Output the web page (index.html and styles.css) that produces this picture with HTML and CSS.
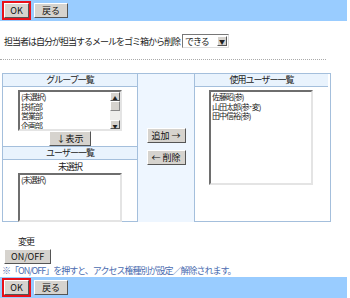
FILE: index.html
```html
<!DOCTYPE html>
<html>
<head>
    <title>アクセス権設定</title>
    <link rel="stylesheet" href="styles.css">
</head>
<body>
    <div class="bar">
        <span class="ok-frame"><button class="btn ok-button">OK</button></span>
        <button class="btn">戻る</button>
    </div>

    <div class="option-row">
        <span>担当者は自分が担当するメールをゴミ箱から削除</span>
        <span class="dropdown"><span class="dropdown-value">できる</span><span class="dropdown-arrow">&#9660;</span></span>
    </div>

    <div class="dotted-line"></div>

    <div class="panel">
        <div class="col col-left">
            <div class="col-head">グループ一覧</div>
            <div class="group-box">
                <div class="listbox group-list">
                    <div class="list-items">
                        <div>(未選択)</div>
                        <div>技術部</div>
                        <div>営業部</div>
                        <div>企画部</div>
                    </div>
                    <div class="scrollbar">
                        <span class="scroll-btn">&#9650;</span>
                        <span class="scroll-thumb"></span>
                        <span class="scroll-track"></span>
                        <span class="scroll-btn">&#9660;</span>
                    </div>
                </div>
                <button class="btn show-button">↓表示</button>
            </div>
            <div class="col-head sub-head">ユーザー一覧</div>
            <div class="user-box">
                <div class="user-label">未選択</div>
                <div class="listbox user-list">
                    <div class="list-items">
                        <div>(未選択)</div>
                    </div>
                </div>
            </div>
        </div>
        <div class="col col-mid">
            <button class="btn move-button">追加 →</button>
            <button class="btn move-button">← 削除</button>
        </div>
        <div class="col col-right">
            <div class="col-head">使用ユーザー一覧</div>
            <div class="listbox member-list">
                <div class="list-items">
                    <div>佐藤昭(参)</div>
                    <div>山田太郎(参･変)</div>
                    <div>田中信裕(参)</div>
                </div>
            </div>
        </div>
    </div>

    <div class="change-label">変更</div>
    <button class="btn onoff-button">ON/OFF</button>
    <div class="note">※「ON/OFF」を押すと、アクセス権種別が設定／解除されます。</div>

    <div class="bar">
        <span class="ok-frame"><button class="btn ok-button">OK</button></span>
        <button class="btn">戻る</button>
    </div>
</body>
</html>
```

FILE: styles.css
```css
body {
    margin: 0;
    width: 347px;
    font-family: "Noto Sans CJK JP", "DejaVu Sans", sans-serif;
    font-size: 9px;
    letter-spacing: -1px;
    color: #222;
    background-color: #fff;
}

.bar {
    display: flex;
    align-items: center;
    gap: 3px;
    height: 21px;
    padding-left: 2px;
    background-color: #99ccff;
}

.btn {
    font-family: inherit;
    font-size: 9px;
    letter-spacing: 0;
    line-height: 11px;
    color: #111;
    background-color: #d6d3ce;
    border: 1px solid;
    border-color: #fff #555 #555 #fff;
    padding: 1px 7px;
    margin: 0;
    height: 15px;
}

.ok-frame {
    display: inline-flex;
    border: 2px solid #e8101a;
}

.ok-button {
    width: 25px;
    padding: 1px 0;
}

.option-row {
    display: flex;
    align-items: center;
    gap: 2px;
    height: 14px;
    margin-top: 13px;
    padding-left: 4px;
}

.dropdown {
    display: inline-flex;
    align-items: center;
    justify-content: space-between;
    width: 43px;
    height: 12px;
    border: 1px solid;
    border-color: #777 #ddd #ddd #777;
    padding-left: 2px;
}

.dropdown-arrow {
    font-size: 6px;
    letter-spacing: 0;
    width: 10px;
    height: 10px;
    line-height: 10px;
    text-align: center;
    background-color: #d6d3ce;
    border: 1px solid;
    border-color: #fff #555 #555 #fff;
    box-sizing: border-box;
    margin-right: 1px;
}

.dotted-line {
    width: 326px;
    margin-top: 11px;
    border-top: 1px dotted #aaa;
}

.panel {
    display: grid;
    grid-template-columns: 135px 57px 133px;
    width: 327px;
    height: 147px;
    margin: 13px 0 0 2px;
    border: 1px solid #a4bfdc;
}

.col {
    display: flex;
    flex-direction: column;
}

.col-left {
    border-right: 1px solid #a4bfdc;
}

.col-head {
    height: 12px;
    line-height: 12px;
    text-align: center;
    background-color: #e9f3fd;
    border-bottom: 1px solid #a4bfdc;
}

.sub-head {
    border-top: 1px solid #a4bfdc;
}

.group-box {
    display: flex;
    flex-direction: column;
    align-items: center;
    padding-top: 3px;
    height: 56px;
}

.listbox {
    display: flex;
    background-color: #fff;
    border: 2px solid;
    border-color: #6e6e6e #e4e4e4 #e4e4e4 #6e6e6e;
    font-size: 8px;
    line-height: 9.5px;
    overflow: hidden;
}

.list-items {
    flex: 1;
    padding-left: 1px;
}

.group-list {
    width: 100px;
    height: 38px;
    margin-left: 15px;
    align-self: flex-start;
}

.scrollbar {
    display: flex;
    flex-direction: column;
    width: 10px;
    background-color: #eeeeec;
}

.scroll-btn {
    height: 9px;
    font-size: 5px;
    line-height: 9px;
    letter-spacing: 0;
    text-align: center;
    background-color: #d6d3ce;
    border: 1px solid;
    border-color: #fff #555 #555 #fff;
    box-sizing: border-box;
}

.scroll-thumb {
    height: 10px;
    background-color: #d6d3ce;
    border: 1px solid;
    border-color: #fff #888 #888 #fff;
    box-sizing: border-box;
}

.scroll-track {
    flex: 1;
}

.show-button {
    padding: 1px 6px;
}

.user-box {
    display: flex;
    flex-direction: column;
    padding-left: 15px;
}

.user-label {
    width: 104px;
    text-align: center;
    line-height: 12px;
    margin-top: 1px;
}

.user-list {
    width: 100px;
    height: 45px;
}

.col-mid {
    justify-content: center;
    align-items: center;
    gap: 7px;
    background-color: #eef6ff;
    border-right: 1px solid #a4bfdc;
    padding-bottom: 4px;
}

.move-button {
    width: 39px;
    padding: 1px 0;
}

.member-list {
    width: 100px;
    height: 91px;
    margin: 3px 0 0 14px;
}

.change-label {
    margin: 14px 0 0 18px;
    line-height: 12px;
}

.onoff-button {
    margin: 1px 0 0 4px;
    padding: 1px 6px;
}

.note {
    color: #4a6cb0;
    line-height: 12px;
    margin: 1px 0 0 2px;
}
```
